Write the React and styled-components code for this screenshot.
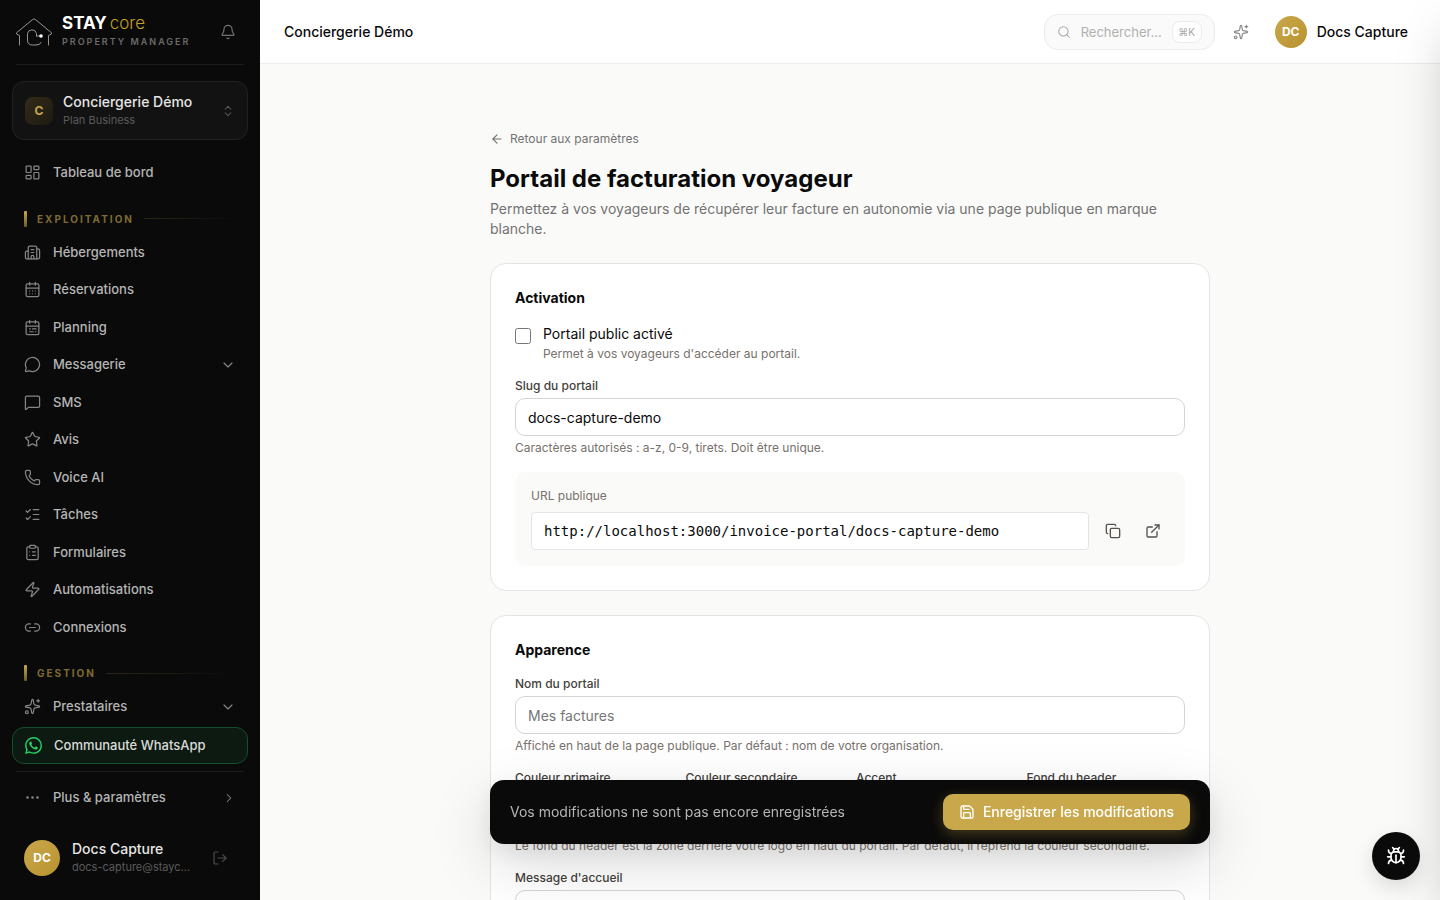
import React from "react";
import styled, { createGlobalStyle, css } from "styled-components";
import {
  Bell, ChevronsUpDown, LayoutDashboard, CalendarDays, MessageCircle, MessageSquare, Star, Phone,
  ListChecks, ClipboardList, Zap, Link2, ChevronDown, ChevronRight, Ellipsis, LogOut, Search,
  ArrowLeft, Copy, ExternalLink, Save, Bug,
} from "lucide-react";

const Global = createGlobalStyle`
  *, *::before, *::after { box-sizing: border-box; }
  body { margin: 0; background: #fafaf8; color: #0a0a0a; font-family: Inter, "Liberation Sans", sans-serif; font-size: 14px; line-height: 20px; overflow: hidden; }
  h1, h2, p, ul { margin: 0; padding: 0; }
  ul { list-style: none; }
  button, input, textarea { font: inherit; color: inherit; }
  button { cursor: pointer; border: 0; background: none; padding: 0; }
  a { color: inherit; text-decoration: none; }
  svg { flex: none; display: block; }
`;

const Shell = styled.div`
  display: grid;
  grid-template-columns: 260px minmax(0, 1fr);
  height: 100vh;
  overflow: hidden;
`;

/* ---------- Sidebar ---------- */
const Sidebar = styled.aside`
  background: #0a0a0a;
  color: #c4c4c4;
  display: flex;
  flex-direction: column;
  overflow: hidden;
  height: 100vh;
`;
const Brand = styled.div`
  height: 65px;
  margin: 0 16px;
  display: flex;
  align-items: center;
  gap: 10px;
  border-bottom: 1px solid #1c1c1c;
`;
const BrandName = styled.div`
  flex: 1;
  display: flex;
  flex-direction: column;
  gap: 4px;
  padding-bottom: 2px;
`;
const Wordmark = styled.div`
  color: #fff;
  font-size: 17px;
  line-height: 18px;
  font-weight: 700;
  display: flex;
  gap: 3px;
  span { color: #c5a028; font-weight: 300; }
`;
const Tagline = styled.div`
  color: #6b6b6b;
  font-size: 9px;
  line-height: 12px;
  font-weight: 600;
  letter-spacing: 2px;
  white-space: nowrap;
`;
const BellButton = styled.button`
  width: 32px;
  height: 32px;
  display: grid;
  place-items: center;
  color: #737373;
`;
const OrgButton = styled.button`
  margin: 16px 12px 15px;
  height: 59px;
  flex: none;
  padding: 0 12px;
  border: 1px solid #212121;
  border-radius: 12px;
  background: #121212;
  display: flex;
  align-items: center;
  gap: 10px;
  text-align: left;
  color: #5a5a5a;
`;
const OrgInitial = styled.span`
  width: 28px;
  height: 28px;
  border-radius: 8px;
  display: grid;
  place-items: center;
  background: linear-gradient(135deg, #342b17, #1c1a13);
  color: #c9a84c;
  font-size: 12px;
  font-weight: 700;
`;
const Stack = styled.span`
  flex: 1;
  min-width: 0;
  display: flex;
  flex-direction: column;
`;
const Primary = styled.span`
  color: #e6e6e6;
  font-size: 14px;
  line-height: 18px;
  font-weight: 500;
`;
const Secondary = styled.span`
  color: #5a5a5a;
  font-size: 11px;
  line-height: 18px;
  white-space: nowrap;
`;
const Nav = styled.nav`
  padding: 0 12px;
  display: flex;
  flex-direction: column;
`;
const NavList = styled.ul`
  display: flex;
  flex-direction: column;
  gap: 2px;
`;
const NavLink = styled.a`
  display: flex;
  align-items: center;
  gap: 12px;
  padding: 8px 12px;
  border-radius: 12px;
  font-size: 13px;
  line-height: 1.5;
  font-weight: 500;
  color: #b5b5b5;
  svg { color: #858585; }
  span { flex: 1; }
  ${(p) => p.$highlight && css`
    border: 1px solid #12502b;
    background: #0c1a11;
    color: #dadada;
    svg { color: #25d366; }
  `}
`;
const SectionHead = styled.div`
  display: flex;
  align-items: center;
  gap: 10px;
  padding: 0 12px;
  margin: 20px 0 8px;
  height: 16px;
  color: #7f6a33;
  font-size: 10px;
  line-height: 16px;
  font-weight: 700;
  letter-spacing: 2px;
  &::before { content: ""; width: 3px; height: 16px; border-radius: 1px; background: linear-gradient(#c9a84c, #6b5a2c); }
  &::after { content: ""; flex: 1; height: 1px; background: linear-gradient(90deg, #2b2616, #0a0a0a); }
`;
const SideFoot = styled.div`
  margin: 7px 12px 0;
`;
const Rule = styled.div`
  height: 1px;
  margin: 0 4px 8px;
  background: #1c1c1c;
`;
const SideUser = styled.div`
  margin-top: 16px;
  padding: 8px 12px;
  display: flex;
  align-items: center;
  gap: 12px;
`;
const LogoutButton = styled.button`
  width: 32px;
  height: 32px;
  display: grid;
  place-items: center;
  color: #4d4d4d;
`;
const Avatar = styled.span`
  width: ${(p) => p.$size}px;
  height: ${(p) => p.$size}px;
  flex: none;
  border-radius: 50%;
  display: grid;
  place-items: center;
  background: linear-gradient(135deg, #c9a84c, #b8922e);
  color: #fff;
  font-size: 12px;
  font-weight: 700;
`;

/* ---------- Main ---------- */
const Main = styled.div`
  display: flex;
  flex-direction: column;
  min-width: 0;
  height: 100vh;
  overflow: hidden;
`;
const TopBar = styled.header`
  flex: none;
  height: 64px;
  padding: 0 32px 0 24px;
  background: #fff;
  border-bottom: 1px solid #ececec;
  display: flex;
  align-items: center;
`;
const TopTitle = styled.div`
  flex: 1;
  font-size: 14px;
  font-weight: 500;
`;
const SearchBox = styled.label`
  width: 171px;
  height: 36px;
  padding: 0 12px;
  border: 1px solid #ececec;
  border-radius: 14px;
  background: #fafafa;
  display: flex;
  align-items: center;
  gap: 10px;
  color: #a8a8a8;
  input { flex: 1; min-width: 0; width: 0; height: 20px; border: 0; padding: 0; background: none; outline: 0; font-size: 13px; }
  input::placeholder { color: #b0b0b0; opacity: 1; }
`;
const Kbd = styled.kbd`
  width: 30px;
  height: 22px;
  border: 1px solid #ececec;
  border-radius: 8px;
  background: #fff;
  font-family: Inter, sans-serif;
  font-size: 10px;
  line-height: 20px;
  text-align: center;
`;
const TopIcon = styled.button`
  width: 32px;
  height: 32px;
  margin: 0 18px 0 10px;
  display: grid;
  place-items: center;
  color: #8a8a8a;
`;
const UserButton = styled.button`
  display: flex;
  align-items: center;
  gap: 10px;
  font-size: 14px;
  font-weight: 500;
`;
const Scroll = styled.main`
  flex: 1;
  min-height: 0;
  overflow: hidden;
  padding: 65px 24px 0;
`;
const Page = styled.div`
  max-width: 720px;
  margin: 0 auto;
  display: flex;
  flex-direction: column;
`;
const BackLink = styled.a`
  display: flex;
  align-items: center;
  gap: 6px;
  align-self: flex-start;
  color: #737373;
  font-size: 12px;
  line-height: 20px;
`;
const Title = styled.h1`
  margin-top: 14px;
  font-size: 24px;
  line-height: 32px;
  font-weight: 700;
`;
const Lead = styled.p`
  margin: 4px 0 24px;
  color: #737373;
`;
const Card = styled.section`
  margin-bottom: 24px;
  padding: 24px;
  border: 1px solid #e5e5e5;
  border-radius: 16px;
  background: #fff;
  display: flex;
  flex-direction: column;
  gap: 16px;
`;
const CardTitle = styled.h2`
  font-size: 14px;
  line-height: 20px;
  font-weight: 700;
`;
const CheckRow = styled.label`
  display: flex;
  gap: 12px;
  input { width: 16px; height: 16px; margin: 4px 0 0; flex: none; }
`;
const CheckText = styled.span`
  display: flex;
  flex-direction: column;
  gap: 2px;
  line-height: 20px;
`;
const Hint = styled.span`
  color: #78716c;
  font-size: 12px;
  line-height: 16px;
`;
const Field = styled.div`
  display: flex;
  flex-direction: column;
  gap: 4px;
  min-width: 0;
`;
const ColorField = styled(Field)`
  gap: 8px;
`;
const Label = styled.label`
  color: #44403c;
  font-size: 12px;
  line-height: 16px;
  font-weight: 500;
`;
const TextInput = styled.input`
  width: 100%;
  height: 38px;
  padding: 0 12px;
  border: 1px solid #d4d4d4;
  border-radius: 10px;
  background: #fff;
  outline: 0;
  &::placeholder { color: #757575; opacity: 1; }
`;
const UrlPanel = styled.div`
  padding: 16px;
  border-radius: 10px;
  background: #fafaf9;
  display: flex;
  flex-direction: column;
  gap: 8px;
`;
const UrlLabel = styled(Hint).attrs({ as: "label" })``;
const UrlRow = styled.div`
  display: flex;
  align-items: center;
  gap: 8px;
`;
const UrlInput = styled(TextInput)`
  flex: 1;
  min-width: 0;
  border-color: #e5e5e5;
  border-radius: 4px;
  font-family: "DejaVu Sans Mono", monospace;
`;
const SquareButton = styled.button`
  width: 32px;
  height: 32px;
  display: grid;
  place-items: center;
  color: #57534e;
`;
const ColorGrid = styled.div`
  display: grid;
  grid-template-columns: repeat(4, minmax(0, 1fr));
  gap: 12px;
`;
const ColorInput = styled(TextInput)`
  height: 40px;
  padding: 4px;
`;
const TextArea = styled.textarea`
  height: 80px;
  padding: 8px 12px;
  border: 1px solid #d4d4d4;
  border-radius: 10px;
  resize: none;
`;

/* ---------- Floating layers ---------- */
const SaveBar = styled.div`
  position: fixed;
  left: 260px;
  right: 0;
  bottom: 56px;
  margin: 0 auto;
  width: min(720px, calc(100% - 308px));
  height: 64px;
  padding: 0 20px;
  border-radius: 14px;
  background: #0a0a0a;
  color: #b5b5b5;
  display: flex;
  align-items: center;
  justify-content: space-between;
  box-shadow: 0 20px 60px rgba(0, 0, 0, 0.15), 0 8px 24px rgba(0, 0, 0, 0.08);
`;
const SaveButton = styled.button`
  height: 36px;
  padding: 0 16px;
  border-radius: 10px;
  background: #c9a84c;
  color: #fff;
  font-weight: 500;
  display: flex;
  align-items: center;
  gap: 8px;
  box-shadow: 0 4px 14px rgba(201, 168, 76, 0.3);
`;
const BugButton = styled.button`
  position: fixed;
  right: 20px;
  bottom: 20px;
  width: 48px;
  height: 48px;
  border-radius: 50%;
  background: #0a0a0a;
  color: #fff;
  display: grid;
  place-items: center;
  box-shadow: 0 8px 20px rgba(0, 0, 0, 0.12);
`;
const Drawer = styled.div`
  position: fixed;
  top: 0;
  bottom: 0;
  left: 100%;
  width: 400px;
  background: #fff;
  pointer-events: none;
  box-shadow: 0 25px 50px -12px rgba(0, 0, 0, 0.25);
`;

/* ---------- Drawings ---------- */
const Svg = ({ size = 17, width = 1.75, children }) => (
  <svg width={size} height={size} viewBox="0 0 24 24" fill="none" stroke="currentColor" strokeWidth={width} strokeLinecap="round" strokeLinejoin="round" aria-hidden="true">
    {children}
  </svg>
);
const Sparkle = ({ size }) => (
  <Svg size={size}>
    <path d="M11.017 2.814a1 1 0 0 1 1.966 0l1.051 5.558a2 2 0 0 0 1.594 1.594l5.558 1.051a1 1 0 0 1 0 1.966l-5.558 1.051a2 2 0 0 0-1.594 1.594l-1.051 5.558a1 1 0 0 1-1.966 0l-1.051-5.558a2 2 0 0 0-1.594-1.594l-5.558-1.051a1 1 0 0 1 0-1.966l5.558-1.051a2 2 0 0 0 1.594-1.594z" />
    <path d="M20 2v4M22 4h-4" />
    <circle cx="4" cy="20" r="2" />
  </Svg>
);
const Hotel = () => (
  <Svg>
    <path d="M10 12h4M10 8h4M14 21v-3a2 2 0 0 0-4 0v3" />
    <path d="M6 10H4a2 2 0 0 0-2 2v7a2 2 0 0 0 2 2h16a2 2 0 0 0 2-2V9a2 2 0 0 0-2-2h-2" />
    <path d="M6 21V5a2 2 0 0 1 2-2h8a2 2 0 0 1 2 2v16" />
  </Svg>
);
const Planner = () => (
  <Svg>
    <rect x="3" y="4" width="18" height="18" rx="2" />
    <path d="M8 2v4M16 2v4M3 10h18M8 14h1M12 14h5M8 18h5M16 18h1" />
  </Svg>
);
const WhatsApp = () => (
  <svg width="17" height="17" viewBox="0 0 24 24" fill="currentColor" aria-hidden="true">
    <path d="M17.472 14.382c-.297-.149-1.758-.867-2.030-.967-.273-.099-.471-.148-.670.150-.197.297-.767.966-.940 1.164-.173.199-.347.223-.644.075-.297-.150-1.255-.463-2.390-1.475-.883-.788-1.480-1.761-1.653-2.059-.173-.297-.018-.458.130-.606.134-.133.298-.347.446-.520.149-.174.198-.298.298-.497.099-.198.050-.371-.025-.520-.075-.149-.669-1.612-.916-2.207-.242-.579-.487-.500-.669-.510-.173-.008-.371-.010-.570-.010-.198 0-.520.074-.792.372-.272.297-1.040 1.016-1.040 2.479 0 1.462 1.065 2.875 1.213 3.074.149.198 2.096 3.200 5.077 4.487.709.306 1.262.489 1.694.625.712.227 1.360.195 1.871.118.571-.085 1.758-.719 2.006-1.413.248-.694.248-1.289.173-1.413-.074-.124-.272-.198-.570-.347m-5.421 7.403h-.004a9.870 9.870 0 0 1-5.031-1.378l-.361-.214-3.741.982.998-3.648-.235-.374a9.860 9.860 0 0 1-1.510-5.260c.001-5.450 4.436-9.884 9.888-9.884 2.640 0 5.122 1.030 6.988 2.898a9.825 9.825 0 0 1 2.893 6.994c-.003 5.450-4.437 9.884-9.885 9.884m8.413-18.297A11.815 11.815 0 0 0 12.050 0C5.495 0 .160 5.335.157 11.892c0 2.096.547 4.142 1.588 5.945L.057 24l6.305-1.654a11.882 11.882 0 0 0 5.683 1.448h.005c6.554 0 11.890-5.335 11.893-11.893a11.821 11.821 0 0 0-3.480-8.413Z" />
  </svg>
);
const Logo = () => (
  <svg width="36" height="28" viewBox="0 0 36 28" fill="none" stroke="#949494" strokeWidth="1" strokeLinejoin="round" strokeLinecap="round" aria-hidden="true">
    <path d="M3.500 27V17.500L.5 16V14.800L16.500 1.600Q18 .3 19.500 1.600L35.500 14.800V16L32.500 17.500V27" />
    <path d="M20.500 18V15.500A4.600 4.600 0 0 0 11.500 15.500V22Q11.500 27 16.500 27H20Q24.500 27 25 24.500M20.500 18H24" />
    <circle cx="25" cy="18" r="1.800" fill="#fff" stroke="none" />
  </svg>
);

const icon = { size: 17, strokeWidth: 1.75, "aria-hidden": true };
const OPERATIONS = [
  ["Hébergements", <Hotel />],
  ["Réservations", <CalendarDays {...icon} />],
  ["Planning", <Planner />],
  ["Messagerie", <MessageCircle {...icon} />, true],
  ["SMS", <MessageSquare {...icon} />],
  ["Avis", <Star {...icon} />],
  ["Voice AI", <Phone {...icon} />],
  ["Tâches", <ListChecks {...icon} />],
  ["Formulaires", <ClipboardList {...icon} />],
  ["Automatisations", <Zap {...icon} />],
  ["Connexions", <Link2 {...icon} />],
];
const COLORS = [
  ["Couleur primaire", "#0a0a0a"],
  ["Couleur secondaire", "#ffffff"],
  ["Accent", "#c9a84c"],
  ["Fond du header", "#ffffff"],
];

const NavItem = ({ label, glyph, expandable, highlight }) => (
  <li>
    <NavLink href="#" $highlight={highlight}>
      {glyph}
      <span>{label}</span>
      {expandable && <ChevronDown size={16} strokeWidth={1.75} />}
    </NavLink>
  </li>
);

export default function App() {
  return (
    <>
      <Global />
      <Shell>
        <Sidebar>
          <Brand>
            <Logo />
            <BrandName>
              <Wordmark>STAY<span>core</span></Wordmark>
              <Tagline>PROPERTY MANAGER</Tagline>
            </BrandName>
            <BellButton aria-label="Notifications"><Bell size={16} strokeWidth={1.75} /></BellButton>
          </Brand>
          <OrgButton>
            <OrgInitial>C</OrgInitial>
            <Stack>
              <Primary>Conciergerie Démo</Primary>
              <Secondary>Plan Business</Secondary>
            </Stack>
            <ChevronsUpDown size={14} strokeWidth={1.75} />
          </OrgButton>
          <Nav>
            <NavList>
              <NavItem label="Tableau de bord" glyph={<LayoutDashboard {...icon} />} />
            </NavList>
            <SectionHead>EXPLOITATION</SectionHead>
            <NavList>
              {OPERATIONS.map(([label, glyph, expandable]) => (
                <NavItem key={label} label={label} glyph={glyph} expandable={expandable} />
              ))}
            </NavList>
            <SectionHead>GESTION</SectionHead>
            <NavList>
              <NavItem label="Prestataires" glyph={<Sparkle />} expandable />
              <NavItem label="Communauté WhatsApp" glyph={<WhatsApp />} highlight />
            </NavList>
          </Nav>
          <SideFoot>
            <Rule />
            <NavLink href="#">
              <Ellipsis {...icon} />
              <span>Plus &amp; paramètres</span>
              <ChevronRight size={14} strokeWidth={1.75} />
            </NavLink>
            <SideUser>
              <Avatar $size={36}>DC</Avatar>
              <Stack>
                <Primary>Docs Capture</Primary>
                <Secondary>docs-capture@stayc...</Secondary>
              </Stack>
              <LogoutButton aria-label="Se déconnecter"><LogOut size={16} strokeWidth={1.75} /></LogoutButton>
            </SideUser>
          </SideFoot>
        </Sidebar>

        <Main>
          <TopBar>
            <TopTitle>Conciergerie Démo</TopTitle>
            <SearchBox>
              <Search size={14} strokeWidth={1.75} />
              <input type="text" placeholder="Rechercher..." aria-label="Rechercher" />
              <Kbd>⌘K</Kbd>
            </SearchBox>
            <TopIcon aria-label="Assistant"><Sparkle size={16} /></TopIcon>
            <UserButton>
              <Avatar $size={32}>DC</Avatar>
              Docs Capture
            </UserButton>
          </TopBar>
          <Scroll>
            <Page>
              <BackLink href="#"><ArrowLeft size={14} strokeWidth={2} />Retour aux paramètres</BackLink>
              <Title>Portail de facturation voyageur</Title>
              <Lead>Permettez à vos voyageurs de récupérer leur facture en autonomie via une page publique en marque blanche.</Lead>

              <Card>
                <CardTitle>Activation</CardTitle>
                <CheckRow>
                  <input type="checkbox" />
                  <CheckText>
                    Portail public activé
                    <Hint>Permet à vos voyageurs d'accéder au portail.</Hint>
                  </CheckText>
                </CheckRow>
                <Field>
                  <Label htmlFor="slug">Slug du portail</Label>
                  <TextInput id="slug" defaultValue="docs-capture-demo" />
                  <Hint>Caractères autorisés : a-z, 0-9, tirets. Doit être unique.</Hint>
                </Field>
                <UrlPanel>
                  <UrlLabel htmlFor="url">URL publique</UrlLabel>
                  <UrlRow>
                    <UrlInput id="url" readOnly value="http://localhost:3000/invoice-portal/docs-capture-demo" />
                    <SquareButton aria-label="Copier"><Copy size={16} strokeWidth={2} /></SquareButton>
                    <SquareButton aria-label="Ouvrir"><ExternalLink size={16} strokeWidth={2} /></SquareButton>
                  </UrlRow>
                </UrlPanel>
              </Card>

              <Card>
                <CardTitle>Apparence</CardTitle>
                <Field>
                  <Label htmlFor="name">Nom du portail</Label>
                  <TextInput id="name" placeholder="Mes factures" />
                  <Hint>Affiché en haut de la page publique. Par défaut : nom de votre organisation.</Hint>
                </Field>
                <ColorField>
                  <ColorGrid>
                    {COLORS.map(([label, value], i) => (
                      <Field key={label}>
                        <Label htmlFor={"color" + i}>{label}</Label>
                        <ColorInput id={"color" + i} type="color" defaultValue={value} />
                      </Field>
                    ))}
                  </ColorGrid>
                  <Hint>Le fond du header est la zone derrière votre logo en haut du portail. Par défaut, il reprend la couleur secondaire.</Hint>
                </ColorField>
                <Field>
                  <Label htmlFor="welcome">Message d'accueil</Label>
                  <TextArea id="welcome" />
                </Field>
              </Card>
            </Page>
          </Scroll>
        </Main>
      </Shell>
      <SaveBar>
        <span>Vos modifications ne sont pas encore enregistrées</span>
        <SaveButton><Save size={16} strokeWidth={2} />Enregistrer les modifications</SaveButton>
      </SaveBar>
      <Drawer aria-hidden="true" />
      <BugButton aria-label="Signaler un bug"><Bug size={20} strokeWidth={2} /></BugButton>
    </>
  );
}
